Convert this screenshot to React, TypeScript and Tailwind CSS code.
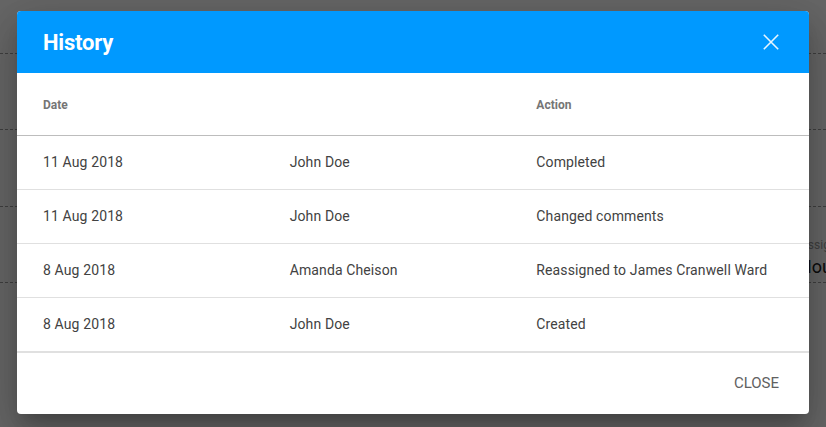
const entries = [
  { date: "11 Aug 2018", user: "John Doe", action: "Completed" },
  { date: "11 Aug 2018", user: "John Doe", action: "Changed comments" },
  { date: "8 Aug 2018", user: "Amanda Cheison", action: "Reassigned to James Cranwell Ward" },
  { date: "8 Aug 2018", user: "John Doe", action: "Created" },
];

export default function App() {
  return (
    <div className="relative h-[427px] w-full overflow-hidden bg-white font-['Roboto',sans-serif]">
      {/* page behind the dialog */}
      <div className="flex flex-col">
        <div className="h-[54px] border-b border-dashed border-[#9e9e9e]" />
        <div className="h-[76px] border-b border-dashed border-[#9e9e9e]" />
        <div className="h-[77px] border-b border-dashed border-[#9e9e9e]" />
        <div className="flex h-[76px] border-b border-dashed border-[#9e9e9e] pl-[800px]">
          <div className="flex flex-col pt-[31px] whitespace-nowrap">
            <span className="text-[12px] leading-[14px] text-[#9e9e9e]">Assigned to</span>
            <span className="-ml-[4px] mt-[4px] text-[18px] leading-[22px] text-[#212121]">Mounir</span>
          </div>
        </div>
      </div>

      <div className="absolute inset-0 bg-black/60" />

      <div className="absolute left-[17px] top-[11px] w-[792px] overflow-hidden rounded-[4px] bg-white shadow-[0_11px_15px_-7px_rgba(0,0,0,0.2),0_24px_38px_3px_rgba(0,0,0,0.14),0_9px_46px_8px_rgba(0,0,0,0.12)]">
        <div className="flex h-[62px] items-center justify-between bg-[#0099ff] pl-[26px] pr-[30px]">
          <h2 className="text-[22px] font-bold tracking-[-0.2px] text-white">History</h2>
          <svg width="16" height="16" viewBox="0 0 16 16" className="text-white/90">
            <path d="M0.8 0.8 L15.2 15.2 M15.2 0.8 L0.8 15.2" stroke="currentColor" strokeWidth="1.6" fill="none" />
          </svg>
        </div>

        <div className="px-[26px]">
          <div className="grid h-[62px] grid-cols-3 items-center pt-[2px] text-[12px] font-bold text-[#757575]">
            <span>Date</span>
            <span />
            <span>Action</span>
          </div>
        </div>
        <div className="border-t border-[#bdbdbd]">
          {entries.map((e, i) => (
            <div key={i} className="border-b border-[#e0e0e0] px-[26px] last:border-b-2">
              <div className="grid h-[53px] grid-cols-3 items-center text-[14px] tracking-[0.12px] text-[#424242]">
                <span>{e.date}</span>
                <span>{e.user}</span>
                <span className="whitespace-nowrap">{e.action}</span>
              </div>
            </div>
          ))}
        </div>

        <div className="flex h-[61px] items-center justify-end pr-[30px]">
          <button className="text-[15px] uppercase text-[#616161]">Close</button>
        </div>
      </div>
    </div>
  );
}
